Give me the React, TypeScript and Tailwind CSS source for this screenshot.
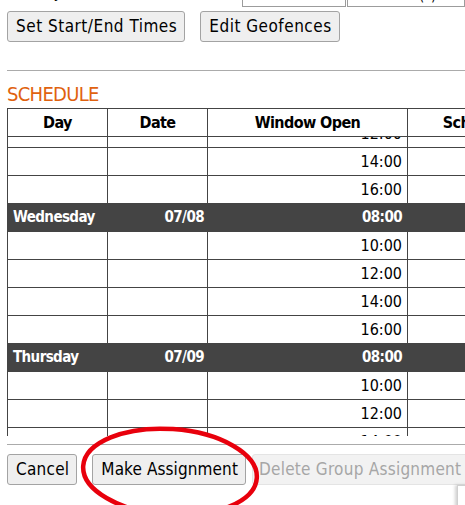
import React from 'react';

type Row = { day?: string; date?: string; time: string };

const rows: Row[] = [
  { time: '12:00' },
  { time: '14:00' },
  { time: '16:00' },
  { day: 'Wednesday', date: '07/08', time: '08:00' },
  { time: '10:00' },
  { time: '12:00' },
  { time: '14:00' },
  { time: '16:00' },
  { day: 'Thursday', date: '07/09', time: '08:00' },
  { time: '10:00' },
  { time: '12:00' },
  { time: '14:00' },
  { time: '16:00' },
];

const font = "font-['DejaVu_Sans_Condensed','DejaVu_Sans',sans-serif]";

function Button({ label, disabled, className = '' }: { label: string; disabled?: boolean; className?: string }) {
  return (
    <button
      className={
        disabled
          ? `h-[31px] px-[6px] bg-[#f2f2f2] border border-[#e4e4e4] rounded-[3px] text-[#a6a6a6] text-[17px] tracking-[0.25px] whitespace-nowrap ${className}`
          : `h-[31px] pl-[8px] pr-[7px] bg-[#efefef] border border-[#a3a3a3] rounded-[3px] text-black text-[17px] whitespace-nowrap ${className}`
      }
    >
      {label}
    </button>
  );
}

export default function App() {
  return (
    <div className={`relative w-[465px] h-[505px] overflow-hidden bg-white pl-[7px] ${font}`}>
      {/* previous form row, scrolled mostly out of view */}
      <div className="h-[7px] overflow-hidden flex items-end">
        <span className="w-[240px] text-[15px] leading-[20px] pl-[28px] mb-[4px]">Day</span>
        <div className="w-[107px] h-[24px] border border-[#9c9c9c]"></div>
        <div className="ml-[1px] w-[120px] h-[24px] border border-[#9c9c9c] text-[15px] pl-[38px] leading-[22px]">Time(*)</div>
      </div>

      <div className="mt-[4px] flex gap-[15px]">
        <Button label="Set Start/End Times" className="tracking-[0.5px]" />
        <Button label="Edit Geofences" className="tracking-[0.5px]" />
      </div>

      <div className="mt-[28px] border-t border-[#ababab] w-[470px]"></div>

      <div className="h-[37px] pt-[13px]">
        <h2 className="text-[20px] leading-[20px] tracking-[-0.7px] text-[#e0620f]">SCHEDULE</h2>
      </div>

      {/* schedule table */}
      <div className="w-[560px] border-l border-[#444] text-[16px] text-black">
        <div className="grid grid-cols-[100px_100px_200px_140px] h-[29px] border-t border-b border-[#444] font-bold tracking-[-0.6px]">
          <div className="border-r border-[#444] flex items-center justify-center">Day</div>
          <div className="border-r border-[#444] flex items-center justify-center">Date</div>
          <div className="border-r border-[#444] flex items-center justify-center">Window Open</div>
          <div className="border-r border-[#444] flex items-center justify-center">Schedule</div>
        </div>
        <div className="h-[299px] overflow-hidden">
          <div className="-mt-[17px]">
            {rows.map((r, i) => {
              const dark = !!r.day;
              return (
                <div
                  key={i}
                  className={`grid grid-cols-[100px_100px_200px_140px] h-[28px] border-b border-[#444] ${
                    dark ? 'bg-[#444] text-white text-[15px] font-bold tracking-[-0.6px]' : ''
                  }`}
                >
                  <div className="border-r border-[#444] flex items-center pl-[5px]">{r.day}</div>
                  <div className="border-r border-[#444] flex items-center justify-end pr-[3px]">{r.date}</div>
                  <div className="border-r border-[#444] flex items-center justify-end pr-[5px]">{r.time}</div>
                  <div className="border-r border-[#444]"></div>
                </div>
              );
            })}
          </div>
        </div>
      </div>

      <div className="mt-[8px] border-t border-[#ababab] w-[470px]"></div>

      <div className="mt-[9px] flex items-center">
        <Button label="Cancel" className="tracking-[0.25px]" />
        <Button label="Make Assignment" className="ml-[15px] tracking-[0.1px]" />
        <Button label="Delete Group Assignment" disabled className="ml-[6px]" />
      </div>

      {/* popup edge at bottom right */}
      <div className="absolute left-[457px] top-[485px] w-[12px] h-[24px] bg-white border-l border-t border-[#d0d0d0] shadow-[-2px_0_3px_rgba(0,0,0,0.18)]"></div>

      {/* hand-drawn highlight */}
      <svg className="absolute left-0 top-0 pointer-events-none" width="465" height="505">
        <ellipse cx="170" cy="472" rx="87" ry="43" fill="none" stroke="#e8000c" strokeWidth="4.5" transform="rotate(4 170 472)" />
      </svg>
    </div>
  );
}
